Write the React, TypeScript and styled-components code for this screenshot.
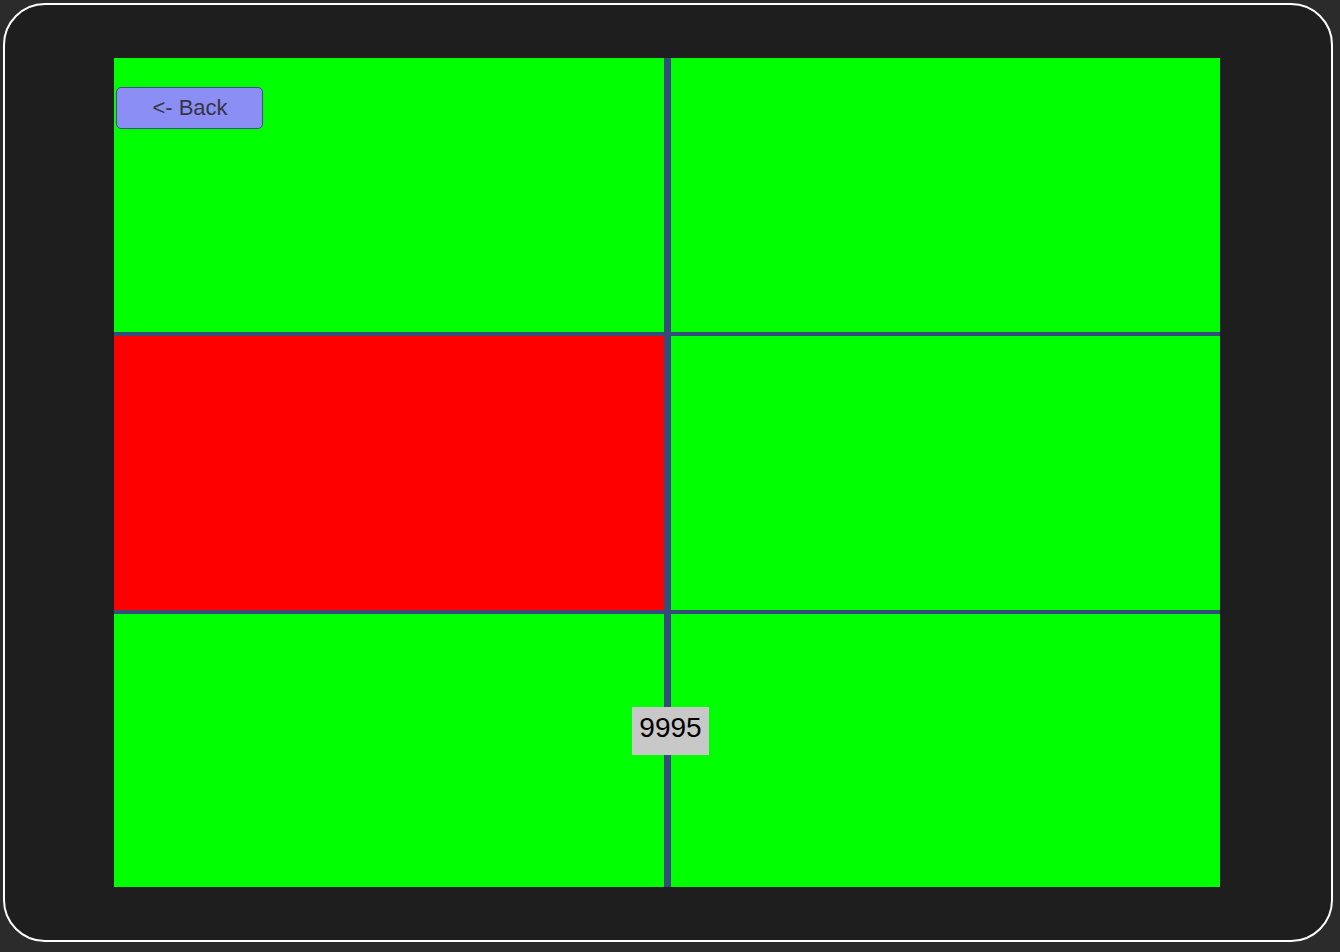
import React from "react";
import styled, { createGlobalStyle } from "styled-components";

const Global = createGlobalStyle`
  html, body { margin: 0; padding: 0; background: #2b2b2b; }
  body { font-family: "Liberation Sans", Arial, sans-serif; }
`;

const Frame = styled.div`
  box-sizing: border-box;
  width: 1330px;
  height: 939px;
  margin: 3px;
  border: 2px solid #ffffff;
  border-radius: 42px;
  background: #1e1e1e;
  padding: 53px 111px 53px 109px;
  display: flex;
`;

const Board = styled.div`
  position: relative;
  flex: 1;
  display: grid;
  grid-template-columns: 550px 549px;
  grid-template-rows: 274px 274px 273px;
  column-gap: 7px;
  row-gap: 4px;
  background: #344d7a;
`;

const Cell = styled.div<{ $color: string }>`
  background: ${(p) => p.$color};
`;

const BackButton = styled.button`
  position: absolute;
  left: 2px;
  top: 29px;
  box-sizing: border-box;
  width: 147px;
  height: 42px;
  border: 1px solid #4a4a80;
  border-radius: 5px;
  background: #8a8ef5;
  color: #353545;
  font-family: "Liberation Sans", Arial, sans-serif;
  font-size: 22px;
  padding: 0 0 0 1px;
  display: flex;
  align-items: center;
  justify-content: center;
  cursor: pointer;
`;

const Counter = styled.div`
  position: absolute;
  left: 518px;
  top: 649px;
  box-sizing: border-box;
  width: 77px;
  height: 48px;
  padding-bottom: 6px;
  background: #c8c8c8;
  color: #000;
  font-family: "Liberation Sans", Arial, sans-serif;
  font-size: 28px;
  display: flex;
  align-items: center;
  justify-content: center;
`;

const cells = ["#00ff00", "#00ff00", "#ff0000", "#00ff00", "#00ff00", "#00ff00"];

export default function App() {
  return (
    <>
      <Global />
      <Frame>
        <Board>
          {cells.map((c, i) => (
            <Cell key={i} $color={c} />
          ))}
          <BackButton>&lt;- Back</BackButton>
          <Counter>9995</Counter>
        </Board>
      </Frame>
    </>
  );
}
